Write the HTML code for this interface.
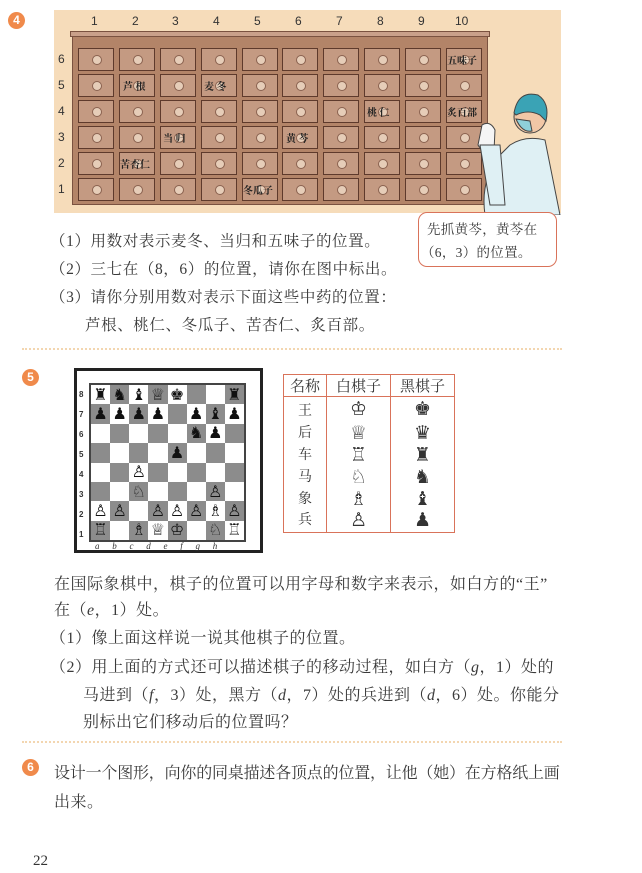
<!DOCTYPE html>
<html><head><meta charset="utf-8">
<style>
*{margin:0;padding:0;box-sizing:border-box}
body{width:642px;height:873px;background:#fff;position:relative;overflow:hidden;font-family:"Liberation Serif","Noto Serif CJK SC","Noto Sans CJK SC",serif;color:#333}
.abs{position:absolute}
.num{position:absolute;width:17px;height:17px;border-radius:50%;background:#f08a4b;color:#fff;font:bold 12px "Liberation Sans",sans-serif;text-align:center;line-height:17px}
.t{position:absolute;font-size:15.5px;white-space:nowrap;letter-spacing:0.6px;color:#3a3a3a}
.t2{position:absolute;font-size:16px;white-space:nowrap;letter-spacing:0.5px;color:#3a3a3a}
.dots{position:absolute;left:22px;width:540px;border-top:2px dotted #f3d6b0}
#cab{left:54px;top:10px;width:507px;height:203px;background:#f6dcba}
#body{left:72px;top:33px;width:416px;height:172px;background:#b38468;border:1px solid #7a5240}
#top{left:70px;top:31px;width:420px;height:6px;background:#c9a08a;border:1px solid #7a5240}
.dr{position:absolute;width:36px;height:23px;background:#c49a82;border:1.5px solid #5e3a2c}
.dr:after{content:"";position:absolute;left:13px;top:6px;width:8px;height:8px;border-radius:50%;background:#e6cdb8;border:1px solid #8a6250}
.lab{position:absolute;font-size:10px;font-weight:bold;color:#222;white-space:nowrap;z-index:2;font-family:"Noto Serif CJK SC",serif}
.cn{position:absolute;font:12px "Liberation Sans",sans-serif;color:#333}
#board{left:74px;top:368px;width:189px;height:185px;border:3px solid #222}
#sq{position:absolute;left:12px;top:12px;width:157px;height:159px;display:grid;grid-template-columns:repeat(8,1fr);grid-template-rows:repeat(8,1fr);border:2px solid #444}
#sq div{display:flex;align-items:center;justify-content:center;font-size:16px;line-height:1;font-family:"DejaVu Sans",sans-serif;color:#111}
.d{background:#8c8c8c}.l{background:#fff}
table{position:absolute;left:283px;top:374px;width:172px;height:159px;border-collapse:collapse;border:1.5px solid #d9735a}
td{border-left:1.5px solid #d9735a;text-align:center;font-size:14px;padding:0;line-height:19px}
th{border:1.5px solid #d9735a;font-weight:normal;font-size:15px;height:21px}
td.p{font-family:"DejaVu Sans",sans-serif;font-size:19px}
</style></head><body>

<div class="num" style="left:8px;top:12px">4</div>
<div id="cab" class="abs"></div>
<div class="cn" style="left:91px;top:14px">1</div><div class="cn" style="left:132px;top:14px">2</div><div class="cn" style="left:172px;top:14px">3</div><div class="cn" style="left:213px;top:14px">4</div><div class="cn" style="left:254px;top:14px">5</div><div class="cn" style="left:295px;top:14px">6</div><div class="cn" style="left:336px;top:14px">7</div><div class="cn" style="left:377px;top:14px">8</div><div class="cn" style="left:418px;top:14px">9</div><div class="cn" style="left:455px;top:14px">10</div>
<div class="cn" style="left:58px;top:52px">6</div><div class="cn" style="left:58px;top:78px">5</div><div class="cn" style="left:58px;top:104px">4</div><div class="cn" style="left:58px;top:130px">3</div><div class="cn" style="left:58px;top:156px">2</div><div class="cn" style="left:58px;top:182px">1</div>
<div id="body" class="abs"></div>
<div id="top" class="abs"></div>
<div class="abs" style="left:0;top:0">
<div class="dr" style="left:78px;top:48px"></div><div class="dr" style="left:119px;top:48px"></div><div class="dr" style="left:160px;top:48px"></div><div class="dr" style="left:201px;top:48px"></div><div class="dr" style="left:242px;top:48px"></div><div class="dr" style="left:282px;top:48px"></div><div class="dr" style="left:323px;top:48px"></div><div class="dr" style="left:364px;top:48px"></div><div class="dr" style="left:405px;top:48px"></div><div class="dr" style="left:446px;top:48px"></div>
<div class="dr" style="left:78px;top:74px"></div><div class="dr" style="left:119px;top:74px"></div><div class="dr" style="left:160px;top:74px"></div><div class="dr" style="left:201px;top:74px"></div><div class="dr" style="left:242px;top:74px"></div><div class="dr" style="left:282px;top:74px"></div><div class="dr" style="left:323px;top:74px"></div><div class="dr" style="left:364px;top:74px"></div><div class="dr" style="left:405px;top:74px"></div><div class="dr" style="left:446px;top:74px"></div>
<div class="dr" style="left:78px;top:100px"></div><div class="dr" style="left:119px;top:100px"></div><div class="dr" style="left:160px;top:100px"></div><div class="dr" style="left:201px;top:100px"></div><div class="dr" style="left:242px;top:100px"></div><div class="dr" style="left:282px;top:100px"></div><div class="dr" style="left:323px;top:100px"></div><div class="dr" style="left:364px;top:100px"></div><div class="dr" style="left:405px;top:100px"></div><div class="dr" style="left:446px;top:100px"></div>
<div class="dr" style="left:78px;top:126px"></div><div class="dr" style="left:119px;top:126px"></div><div class="dr" style="left:160px;top:126px"></div><div class="dr" style="left:201px;top:126px"></div><div class="dr" style="left:242px;top:126px"></div><div class="dr" style="left:282px;top:126px"></div><div class="dr" style="left:323px;top:126px"></div><div class="dr" style="left:364px;top:126px"></div><div class="dr" style="left:405px;top:126px"></div><div class="dr" style="left:446px;top:126px"></div>
<div class="dr" style="left:78px;top:152px"></div><div class="dr" style="left:119px;top:152px"></div><div class="dr" style="left:160px;top:152px"></div><div class="dr" style="left:201px;top:152px"></div><div class="dr" style="left:242px;top:152px"></div><div class="dr" style="left:282px;top:152px"></div><div class="dr" style="left:323px;top:152px"></div><div class="dr" style="left:364px;top:152px"></div><div class="dr" style="left:405px;top:152px"></div><div class="dr" style="left:446px;top:152px"></div>
<div class="dr" style="left:78px;top:178px"></div><div class="dr" style="left:119px;top:178px"></div><div class="dr" style="left:160px;top:178px"></div><div class="dr" style="left:201px;top:178px"></div><div class="dr" style="left:242px;top:178px"></div><div class="dr" style="left:282px;top:178px"></div><div class="dr" style="left:323px;top:178px"></div><div class="dr" style="left:364px;top:178px"></div><div class="dr" style="left:405px;top:178px"></div><div class="dr" style="left:446px;top:178px"></div>
</div>
<div class="lab" style="left:447px;top:52px">五味子</div>
<div class="lab" style="left:123px;top:78px">芦 根</div>
<div class="lab" style="left:204px;top:78px">麦 冬</div>
<div class="lab" style="left:367px;top:104px">桃 仁</div>
<div class="lab" style="left:447px;top:104px">炙百部</div>
<div class="lab" style="left:163px;top:130px">当 归</div>
<div class="lab" style="left:286px;top:130px">黄 芩</div>
<div class="lab" style="left:120px;top:156px">苦杏仁</div>
<div class="lab" style="left:243px;top:182px">冬瓜子</div>

<svg class="abs" style="left:470px;top:85px" width="95" height="130">
<path d="M40 60 Q55 50 75 55 L90 130 L15 130 Q10 95 30 70 Z" fill="#dff0f4" stroke="#444"/>
<path d="M25 45 Q20 35 12 40 L8 60 Q14 70 24 66 Z" fill="#f5f5f5" stroke="#444"/>
<path d="M10 60 L20 120 L35 120 L30 60Z" fill="#dff0f4" stroke="#444"/>
<circle cx="60" cy="32" r="16" fill="#f1c7a6" stroke="#444"/>
<path d="M44 28 Q48 5 68 10 Q80 18 76 36 L70 30 Q58 24 46 30Z" fill="#3aa3b5" stroke="#444"/>
<path d="M46 34 Q52 48 62 46 L60 36Z" fill="#8fd0da" stroke="#444"/>
</svg>

<div class="abs" style="left:418px;top:212px;width:139px;height:55px;border:1.5px solid #d9735a;border-radius:9px;background:#fff"></div>
<div class="t" style="left:427px;top:218px;font-size:13.5px;letter-spacing:0.3px">先抓黄芩，黄芩在</div>
<div class="t" style="left:421px;top:241px;font-size:13.5px;letter-spacing:0.3px">（6，3）的位置。</div>

<div class="t" style="left:50px;top:229px">（1）用数对表示麦冬、当归和五味子的位置。</div>
<div class="t" style="left:50px;top:257px">（2）三七在（8，6）的位置，请你在图中标出。</div>
<div class="t" style="left:50px;top:285px">（3）请你分别用数对表示下面这些中药的位置：</div>
<div class="t" style="left:85px;top:313px">芦根、桃仁、冬瓜子、苦杏仁、炙百部。</div>

<div class="dots" style="top:348px"></div>

<div class="num" style="left:22px;top:369px">5</div>
<div id="board" class="abs">
<div id="sq">
<div class="l">♜</div><div class="d">♞</div><div class="l">♝</div><div class="d">♕</div><div class="l">♚</div><div class="d"></div><div class="l"></div><div class="d">♜</div>
<div class="d">♟</div><div class="l">♟</div><div class="d">♟</div><div class="l">♟</div><div class="d"></div><div class="l">♟</div><div class="d">♝</div><div class="l">♟</div>
<div class="l"></div><div class="d"></div><div class="l"></div><div class="d"></div><div class="l"></div><div class="d">♞</div><div class="l">♟</div><div class="d"></div>
<div class="d"></div><div class="l"></div><div class="d"></div><div class="l"></div><div class="d">♟</div><div class="l"></div><div class="d"></div><div class="l"></div>
<div class="l"></div><div class="d"></div><div class="l">♙</div><div class="d"></div><div class="l"></div><div class="d"></div><div class="l"></div><div class="d"></div>
<div class="d"></div><div class="l"></div><div class="d">♘</div><div class="l"></div><div class="d"></div><div class="l"></div><div class="d">♙</div><div class="l"></div>
<div class="l">♙</div><div class="d">♙</div><div class="l"></div><div class="d">♙</div><div class="l">♙</div><div class="d">♙</div><div class="l">♗</div><div class="d">♙</div>
<div class="d">♖</div><div class="l"></div><div class="d">♗</div><div class="l">♕</div><div class="d">♔</div><div class="l"></div><div class="d">♘</div><div class="l">♖</div>
</div>
<div class="abs" style="left:2px;top:14px;font-size:8px;line-height:20px;font-family:'Liberation Sans',sans-serif;font-weight:bold">8<br>7<br>6<br>5<br>4<br>3<br>2<br>1</div>
<div class="abs" style="left:18px;top:170px;font-size:9px;font-style:italic;word-spacing:10.5px;white-space:nowrap">a b c d e f g h</div>
</div>

<table>
<tr><th>名称</th><th>白棋子</th><th>黑棋子</th></tr>
<tr><td style="padding-top:3px">王</td><td class="p">♔</td><td class="p">♚</td></tr>
<tr><td>后</td><td class="p">♕</td><td class="p">♛</td></tr>
<tr><td>车</td><td class="p">♖</td><td class="p">♜</td></tr>
<tr><td>马</td><td class="p">♘</td><td class="p">♞</td></tr>
<tr><td>象</td><td class="p">♗</td><td class="p">♝</td></tr>
<tr><td>兵</td><td class="p">♙</td><td class="p">♟</td></tr>
</table>

<div class="t2" style="left:54px;top:571px">在国际象棋中，棋子的位置可以用字母和数字来表示，如白方的“王”</div>
<div class="t2" style="left:54px;top:597px">在（<i>e</i>，1）处。</div>
<div class="t2" style="left:50px;top:625px">（1）像上面这样说一说其他棋子的位置。</div>
<div class="t2" style="left:50px;top:654px">（2）用上面的方式还可以描述棋子的移动过程，如白方（<i>g</i>，1）处的</div>
<div class="t2" style="left:83px;top:682px">马进到（<i>f</i>，3）处，黑方（<i>d</i>，7）处的兵进到（<i>d</i>，6）处。你能分</div>
<div class="t2" style="left:83px;top:709px">别标出它们移动后的位置吗？</div>

<div class="dots" style="top:741px"></div>

<div class="num" style="left:22px;top:759px">6</div>
<div class="t2" style="left:54px;top:760px;letter-spacing:-0.2px">设计一个图形，向你的同桌描述各顶点的位置，让他（她）在方格纸上画</div>
<div class="t2" style="left:54px;top:789px">出来。</div>

<div class="abs" style="left:33px;top:853px;font-size:15px;color:#333">22</div>
</body></html>
